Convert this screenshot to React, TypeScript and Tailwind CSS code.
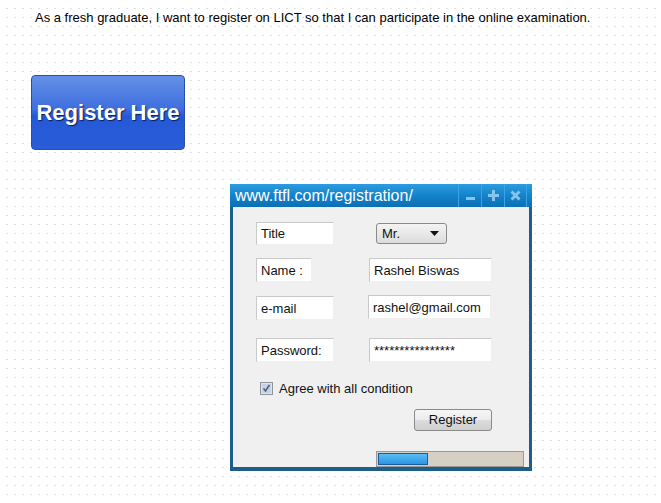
import React from 'react'

const FONT = "font-['Liberation_Sans',Arial,sans-serif]"

function Box({ w, h = 'h-[24px]', children, className = '' }: { w: string; h?: string; children: React.ReactNode; className?: string }) {
    return (
        <div className={`${w} ${h} bg-white border-t border-l border-[#c9c9c9] border-r border-b border-r-[#efefef] border-b-[#efefef] flex items-center pl-[4px] text-[13px] text-[#111] leading-none shrink-0 ${className}`}>
            {children}
        </div>
    )
}

export default function App() {
    return (
        <div className={`${FONT} w-[661px] min-h-[503px] bg-white bg-[radial-gradient(circle,#e0e0e0_0.8px,transparent_1px)] bg-[length:8px_9px] bg-[position:3px_4px]`}>
            {/* Story text */}
            <p className="pt-[10px] pl-[35px] text-[13px] leading-[15px] text-black">
                As a fresh graduate, I want to register on LICT so that I can participate in the online examination.
            </p>

            {/* Big button */}
            <div className="ml-[31px] mt-[50px] w-[154px] h-[75px] rounded-[4px] border border-[#2a4fa8] bg-[linear-gradient(180deg,#6390e6_0%,#3f6fdf_45%,#2458d6_55%,#2a5ed8_100%)] flex items-center justify-center">
                <span className="text-white font-bold text-[22px] [text-shadow:1px_1px_1px_#0b1f55]">Register Here</span>
            </div>

            {/* Window */}
            <div className="ml-[230px] mt-[34px] w-[302px] h-[287px] bg-[#1d5f86] flex flex-col">
                {/* Title bar */}
                <div className="h-[23px] bg-[linear-gradient(180deg,#2c9be0_0%,#1383cc_50%,#0b6fb3_100%)] flex items-center shrink-0">
                    <span className="pl-[5px] text-white text-[16px] leading-none">www.ftfl.com/registration/</span>
                    <div className="ml-auto mr-[5px] flex h-full">
                        <div className="w-[23px] h-full border-l border-[#3da3e3] flex items-end justify-center pb-[7px]">
                            <div className="w-[9px] h-[3px] bg-[#86c4ee]" />
                        </div>
                        <div className="w-[23px] h-full border-l border-[#3da3e3] flex items-center justify-center">
                            <svg width="11" height="11" viewBox="0 0 11 11"><path d="M4 0h3v4h4v3H7v4H4V7H0V4h4z" fill="#86c4ee" /></svg>
                        </div>
                        <div className="w-[23px] h-full border-l border-r border-[#3da3e3] flex items-center justify-center">
                            <svg width="11" height="11" viewBox="0 0 11 11"><path d="M1.5 1.5l8 8M9.5 1.5l-8 8" stroke="#86c4ee" strokeWidth="3" /></svg>
                        </div>
                    </div>
                </div>

                {/* Body */}
                <div className="mx-[3px] h-[260px] bg-[#f0f0f0] flex flex-col text-[13px] text-[#111]">
                    <div className="mt-[15px] ml-[23px] flex items-start">
                        <Box w="w-[78px]" h="h-[23px]">Title</Box>
                        <div className="ml-[42px] mt-[1px] w-[71px] h-[21px] rounded-[3px] border border-[#8a8a8a] bg-[linear-gradient(180deg,#f4f4f4,#dcdcdc)] flex items-center pl-[5px] pr-[7px]">
                            <span>Mr.</span>
                            <svg className="ml-auto" width="9" height="5" viewBox="0 0 9 5"><path d="M0 0h9L4.5 5z" fill="#111" /></svg>
                        </div>
                    </div>
                    <div className="mt-[13px] ml-[23px] flex">
                        <Box w="w-[56px]">Name :</Box>
                        <Box w="w-[123px]" className="ml-[57px]">Rashel Biswas</Box>
                    </div>
                    <div className="mt-[14px] ml-[23px] flex">
                        <Box w="w-[78px]">e-mail</Box>
                        <Box w="w-[123px]" className="ml-[34px] -mt-[1px]">rashel@gmail.com</Box>
                    </div>
                    <div className="mt-[18px] ml-[23px] flex">
                        <Box w="w-[78px]">Password:</Box>
                        <Box w="w-[123px]" className="ml-[35px] items-start pt-[5px] text-[10.5px]">****************</Box>
                    </div>
                    <div className="mt-[20px] ml-[27px] flex items-center h-[13px]">
                        <svg width="13" height="13" viewBox="0 0 13 13">
                            <rect x="0.5" y="0.5" width="12" height="12" fill="#dfe3ea" stroke="#8e949c" />
                            <rect x="2" y="2" width="9" height="9" fill="#c9d1de" />
                            <path d="M3.5 6.5l2 2.5 4-6" stroke="#4a5f9a" strokeWidth="1.6" fill="none" />
                        </svg>
                        <span className="ml-[6px] leading-none">Agree with all condition</span>
                    </div>
                    <div className="mt-[14px] ml-[181px] w-[78px] h-[22px] rounded-[3px] border border-[#8a8a8a] bg-[linear-gradient(180deg,#f6f6f6_0%,#ebebeb_50%,#dcdcdc_51%,#d0d0d0_100%)] flex items-center justify-center">
                        Register
                    </div>
                    <div className="mt-[20px] ml-[143px] w-[148px] h-[18px] border border-[#9a9a9a] bg-[#d6d0c4] p-[1px] flex">
                        <div className="w-[50px] h-full border border-[#1a5c9e] bg-[linear-gradient(180deg,#5cbcf5,#2a96e3)]" />
                    </div>
                </div>
            </div>
        </div>
    )
}
